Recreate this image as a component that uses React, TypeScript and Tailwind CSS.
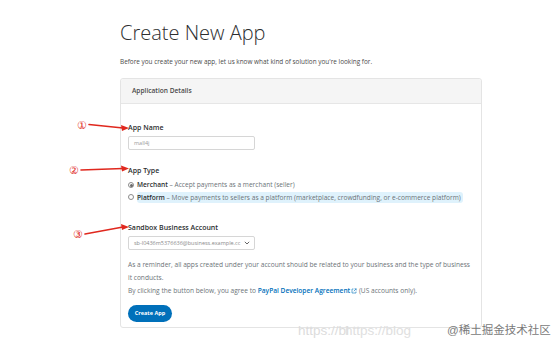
const font = { fontFamily: '"Open Sans", "Noto Sans", sans-serif' };

function Arrow({ x1, y1, x2, y2 }: { x1: number; y1: number; x2: number; y2: number }) {
  return (
    <g>
      <line x1={x1} y1={y1} x2={x2 - 6} y2={y2} stroke="#e0281e" strokeWidth="1.6" strokeLinecap="round" />
      <polygon points={`${x2},${y2} ${x2 - 8},${y2 - 3} ${x2 - 7},${y2 + 3}`} fill="#e0281e" />
    </g>
  );
}

export default function App() {
  return (
    <div className="relative w-[554px] h-[350px] overflow-hidden bg-white text-[#2c2e2f]" style={font}>
      <div className="pl-[120px] pt-[19px]">
        <h1 className="text-[20px] font-light leading-[28px] text-[#2c2e2f]">Create New App</h1>
        <p className="mt-[10px] text-[6.4px] leading-[10px] text-[#4a4a4a]">
          Before you create your new app, let us know what kind of solution you're looking for.
        </p>

        {/* Card */}
        <div className="mt-[11px] w-[362px] h-[250px] rounded-[3px] border border-[#e4e4e4] bg-white">
          <div className="h-[25px] flex items-center pl-[11px] bg-[#f5f5f5] border-b border-[#e6e6e6] rounded-t-[3px]">
            <span className="text-[6.6px] font-semibold text-[#4a4a4a]">Application Details</span>
          </div>

          <div className="pl-[7px] pt-[19px]">
            <div className="text-[7px] font-semibold leading-[10px]">App Name</div>
            <div className="mt-[3px] w-[127px] h-[14px] border border-[#d6d6d6] rounded-[2px] flex items-center pl-[5px]">
              <span className="text-[5.5px] text-[#9a9a9a]">mall4j</span>
            </div>

            <div className="mt-[16px] text-[7px] font-semibold leading-[10px]">App Type</div>
            <div className="mt-[3px] flex items-center h-[12px] gap-[3px]">
              <span className="w-[6px] h-[6px] rounded-full border border-[#8a8a8a] flex items-center justify-center">
                <span className="w-[3px] h-[3px] rounded-full bg-[#6a6a6a]" />
              </span>
              <span className="text-[6.6px] text-[#6c7378]">
                <b className="font-semibold text-[#2c2e2f]">Merchant</b> – Accept payments as a merchant (seller)
              </span>
            </div>
            <div className="flex items-center h-[12px] gap-[3px]">
              <span className="w-[6px] h-[6px] rounded-full border border-[#8a8a8a]" />
              <span className="text-[6.6px] text-[#6c7378] bg-[#dff2fc] rounded-[3px] pr-[2px] leading-[11px]">
                <b className="font-semibold text-[#2c2e2f]">Platform</b> – Move payments to sellers as a platform (marketplace, crowdfunding, or e-commerce platform)
              </span>
            </div>

            <div className="mt-[20px] text-[7px] font-semibold leading-[10px]">Sandbox Business Account</div>
            <div className="mt-[3px] w-[127px] h-[14px] border border-[#d6d6d6] rounded-[2px] flex items-center justify-between pl-[5px] pr-[4px]">
              <span className="text-[5.5px] text-[#8a8a8a] whitespace-nowrap">sb-l0436m5376636@business.example.cc</span>
              <svg width="6" height="4" viewBox="0 0 6 4">
                <path d="M0.8 0.8 L3 3 L5.2 0.8" fill="none" stroke="#555" strokeWidth="0.9" />
              </svg>
            </div>

            <div className="mt-[8px] text-[6.6px] leading-[13px] text-[#6c7378]">
              <div className="whitespace-nowrap">
                As a reminder, all apps created under your account should be related to your business and the type of business
              </div>
              <div>it conducts.</div>
              <div className="whitespace-nowrap">
                By clicking the button below, you agree to{" "}
                <span className="text-[#0070ba] font-semibold">PayPal Developer Agreement</span>
                <svg className="inline-block ml-[1px] align-[-1px]" width="6" height="6" viewBox="0 0 6 6">
                  <path d="M2.5 1H1v4h4V3.5M3.5 0.8H5.2V2.5M5.2 0.8L2.8 3.2" fill="none" stroke="#0070ba" strokeWidth="0.6" />
                </svg>{" "}
                (US accounts only).
              </div>
            </div>

            <button className="mt-[8px] w-[44px] h-[17px] rounded-full bg-[#0070ba] text-white text-[5.5px] font-bold">
              Create App
            </button>
          </div>
        </div>
      </div>

      {/* Annotations */}
      <span className="absolute left-[77px] top-[118px] text-[11px] leading-[13px] text-[#e0281e]">①</span>
      <span className="absolute left-[69px] top-[163px] text-[11px] leading-[13px] text-[#e0281e]">②</span>
      <span className="absolute left-[73px] top-[227px] text-[11px] leading-[13px] text-[#e0281e]">③</span>
      <svg className="absolute left-0 top-0 pointer-events-none" width="554" height="350">
        <Arrow x1={89} y1={124.5} x2={129} y2={128} />
        <Arrow x1={81} y1={170} x2={129} y2={168.5} />
        <Arrow x1={85} y1={234} x2={129} y2={227} />
      </svg>

      {/* Watermark */}
      <div className="absolute left-[298px] top-[321px] text-[13.5px] text-[#dcdcdc] whitespace-nowrap" style={{ fontFamily: '"Liberation Sans", sans-serif' }}>
        https://bl
      </div>
      <div className="absolute left-[345px] top-[321px] text-[13.5px] text-[#e0e0e0] whitespace-nowrap" style={{ fontFamily: '"Liberation Sans", sans-serif' }}>
        https://blog
      </div>
      <div className="absolute left-[447px] top-[322px] text-[11.5px] text-[#7a7a7a] whitespace-nowrap" style={{ fontFamily: '"Liberation Sans", "Noto Sans CJK SC", sans-serif' }}>
        @稀土掘金技术社区
      </div>
    </div>
  );
}
